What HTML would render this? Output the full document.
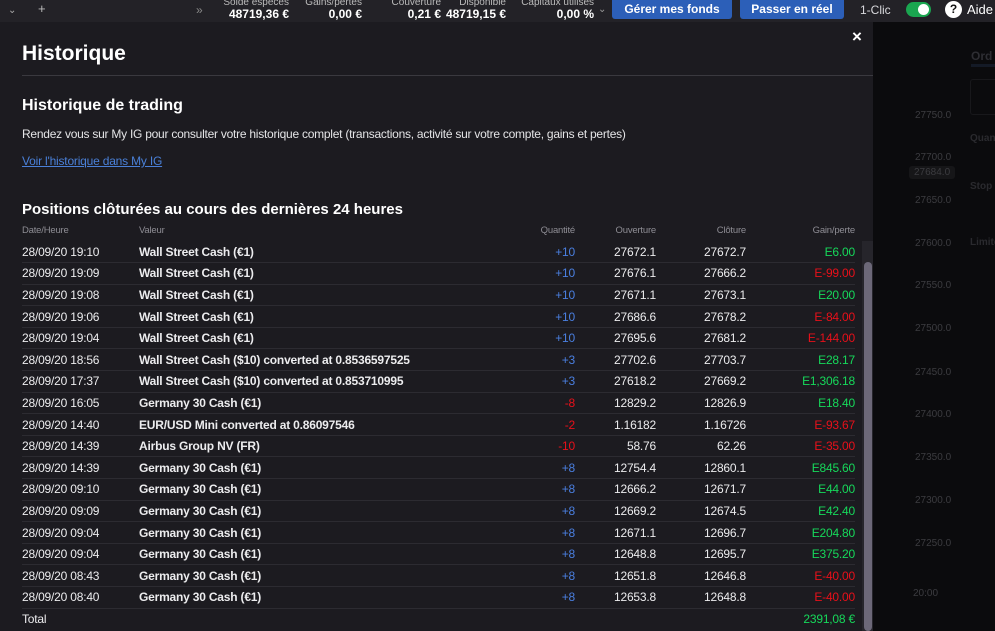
<!DOCTYPE html>
<html><head><meta charset="utf-8">
<style>
*{margin:0;padding:0;box-sizing:border-box}
body{width:995px;height:631px;overflow:hidden;background:#0a0a0c;font-family:"Liberation Sans",sans-serif;color:#e8e8ea;position:relative}
.top{position:absolute;left:0;top:0;width:995px;height:22px;background:#232227}
.top .t{position:absolute;font-size:12px;line-height:12px;color:#d8d8dc;white-space:nowrap}
.lab{position:absolute;top:-3px;font-size:10px;color:#bbb;text-align:right;white-space:nowrap}
.val{position:absolute;top:7px;font-size:12px;font-weight:bold;color:#fff;text-align:right;white-space:nowrap}
.btn{position:absolute;top:0;height:19px;background:#2c5fb8;border-radius:0 0 3px 3px;color:#fff;font-size:12px;font-weight:bold;text-align:center;line-height:18px}
.panel{position:absolute;left:0;top:22px;width:873px;height:609px;background:#1c1b20}
.side{position:absolute;left:873px;top:22px;width:122px;height:609px;background:#0b0b0d}
.ax{position:absolute;left:915px;font-size:10px;color:#3c3c40}
h1{position:absolute;left:22px;top:42px;font-size:21px;font-weight:bold;color:#fff}
.hr{position:absolute;left:22px;top:75px;width:851px;height:1px;background:#3a393f}
h2{position:absolute;left:22px;top:97px;font-size:16px;font-weight:bold;color:#fff}
.p{position:absolute;left:22px;top:127px;font-size:12px;color:#e4e4e6;letter-spacing:-0.25px;white-space:nowrap}
.a{position:absolute;left:22px;top:154px;font-size:12px;color:#4a80d8;text-decoration:underline;letter-spacing:-0.2px}
h3{position:absolute;left:22px;top:201px;font-size:15px;font-weight:bold;color:#fff}
table{position:absolute;left:22px;top:223px;width:833px;border-collapse:collapse;table-layout:fixed;font-size:12px;letter-spacing:-0.2px}
th{font-size:9.5px;font-weight:normal;color:#8e8d94;height:18px;text-align:left;vertical-align:top;padding-top:2px}
td{height:21.6px;border-bottom:1px solid #2c2b31;white-space:nowrap;color:#ececee}
tr.last td{border-bottom:none}
.r{text-align:right}
.n{font-weight:bold}
.b{color:#4a7fe0}.rd{color:#e8101a}.g{color:#16d85a}
.sb{position:absolute;left:862px;top:241px;width:11px;height:390px;background:#26252b}
.th{position:absolute;left:864px;top:262px;width:8px;height:369px;background:#6c6878;border-radius:4px}
</style></head><body>
<div class="top">
 <div class="t" style="left:8px;top:5px;font-size:10px;color:#aaa">⌄</div>
 <div class="t" style="left:38px;top:3px;font-size:13px;color:#bbb">+</div>
 <div class="t" style="left:196px;top:4px;font-size:12px;color:#888">»</div>
 <div class="lab" style="right:706px">Solde espèces</div><div class="val" style="right:706px">48719,36 €</div>
 <div class="lab" style="right:633px">Gains/pertes</div><div class="val" style="right:633px">0,00 €</div>
 <div class="lab" style="right:554px">Couverture</div><div class="val" style="right:554px">0,21 €</div>
 <div class="lab" style="right:489px">Disponible</div><div class="val" style="right:489px">48719,15 €</div>
 <div class="lab" style="right:401px">Capitaux utilisés</div><div class="val" style="right:401px">0,00 %</div>
 <div class="t" style="left:598px;top:4px;font-size:10px;color:#999">⌄</div>
 <div class="btn" style="left:612px;width:120px">Gérer mes fonds</div>
 <div class="btn" style="left:740px;width:104px">Passer en réel</div>
 <div class="t" style="left:860px;top:4px">1-Clic</div>
 <div style="position:absolute;left:906px;top:2px;width:25px;height:15px;border-radius:8px;background:#1aa650"><div style="position:absolute;right:2px;top:2px;width:11px;height:11px;border-radius:50%;background:#fff"></div></div>
 <div style="position:absolute;left:945px;top:1px;width:17px;height:17px;border-radius:50%;background:#fff;color:#111;font-size:12px;font-weight:bold;text-align:center;line-height:17px">?</div>
 <div class="t" style="left:967px;top:4px;font-size:13px;color:#fff">Aide</div>
</div>
<div class="side">
 <div style="position:absolute;left:98px;top:27px;font-size:12px;color:#2e2e33;font-weight:bold">Ord</div>
 <div style="position:absolute;left:98px;top:42px;width:24px;height:3px;background:#141a26"></div>
 <div style="position:absolute;left:97px;top:57px;width:30px;height:36px;border:1px solid #18181b;border-radius:3px"></div>
 <div style="position:absolute;left:97px;top:111px;font-size:10px;color:#2a2a2e;font-weight:bold">Quan</div>
 <div style="position:absolute;left:97px;top:159px;font-size:10px;color:#2a2a2e;font-weight:bold">Stop</div>
 <div style="position:absolute;left:97px;top:215px;font-size:10px;color:#2a2a2e;font-weight:bold">Limite</div>
</div>
<div class="ax" style="top:110px">27750.0</div><div class="ax" style="top:152px">27700.0</div>
<div class="ax" style="top:166px;left:909px;background:#161618;padding:1px 5px;border-radius:3px">27684.0</div>
<div class="ax" style="top:195px">27650.0</div><div class="ax" style="top:238px">27600.0</div>
<div class="ax" style="top:280px">27550.0</div><div class="ax" style="top:323px">27500.0</div>
<div class="ax" style="top:367px">27450.0</div><div class="ax" style="top:409px">27400.0</div>
<div class="ax" style="top:452px">27350.0</div><div class="ax" style="top:495px">27300.0</div>
<div class="ax" style="top:538px">27250.0</div><div class="ax" style="top:588px;left:913px">20:00</div>
<div class="panel"></div>
<div style="position:absolute;left:852px;top:27px;font-size:17px;font-weight:bold;color:#fff">×</div>
<h1>Historique</h1>
<div class="hr"></div>
<h2>Historique de trading</h2>
<div class="p">Rendez vous sur My IG pour consulter votre historique complet (transactions, activité sur votre compte, gains et pertes)</div>
<div class="a">Voir l'historique dans My IG</div>
<h3>Positions clôturées au cours des dernières 24 heures</h3>
<table>
<colgroup><col style="width:117px"><col style="width:330px"><col style="width:106px"><col style="width:81px"><col style="width:90px"><col style="width:109px"></colgroup>
<tr><th>Date/Heure</th><th>Valeur</th><th class="r">Quantité</th><th class="r">Ouverture</th><th class="r">Clôture</th><th class="r">Gain/perte</th></tr>
<tr><td>28/09/20 19:10</td><td class="n">Wall Street Cash (€1)</td><td class="r b">+10</td><td class="r">27672.1</td><td class="r">27672.7</td><td class="r g">E6.00</td></tr>
<tr><td>28/09/20 19:09</td><td class="n">Wall Street Cash (€1)</td><td class="r b">+10</td><td class="r">27676.1</td><td class="r">27666.2</td><td class="r rd">E-99.00</td></tr>
<tr><td>28/09/20 19:08</td><td class="n">Wall Street Cash (€1)</td><td class="r b">+10</td><td class="r">27671.1</td><td class="r">27673.1</td><td class="r g">E20.00</td></tr>
<tr><td>28/09/20 19:06</td><td class="n">Wall Street Cash (€1)</td><td class="r b">+10</td><td class="r">27686.6</td><td class="r">27678.2</td><td class="r rd">E-84.00</td></tr>
<tr><td>28/09/20 19:04</td><td class="n">Wall Street Cash (€1)</td><td class="r b">+10</td><td class="r">27695.6</td><td class="r">27681.2</td><td class="r rd">E-144.00</td></tr>
<tr><td>28/09/20 18:56</td><td class="n">Wall Street Cash ($10) converted at 0.8536597525</td><td class="r b">+3</td><td class="r">27702.6</td><td class="r">27703.7</td><td class="r g">E28.17</td></tr>
<tr><td>28/09/20 17:37</td><td class="n">Wall Street Cash ($10) converted at 0.853710995</td><td class="r b">+3</td><td class="r">27618.2</td><td class="r">27669.2</td><td class="r g">E1,306.18</td></tr>
<tr><td>28/09/20 16:05</td><td class="n">Germany 30 Cash (€1)</td><td class="r rd">-8</td><td class="r">12829.2</td><td class="r">12826.9</td><td class="r g">E18.40</td></tr>
<tr><td>28/09/20 14:40</td><td class="n">EUR/USD Mini converted at 0.86097546</td><td class="r rd">-2</td><td class="r">1.16182</td><td class="r">1.16726</td><td class="r rd">E-93.67</td></tr>
<tr><td>28/09/20 14:39</td><td class="n">Airbus Group NV (FR)</td><td class="r rd">-10</td><td class="r">58.76</td><td class="r">62.26</td><td class="r rd">E-35.00</td></tr>
<tr><td>28/09/20 14:39</td><td class="n">Germany 30 Cash (€1)</td><td class="r b">+8</td><td class="r">12754.4</td><td class="r">12860.1</td><td class="r g">E845.60</td></tr>
<tr><td>28/09/20 09:10</td><td class="n">Germany 30 Cash (€1)</td><td class="r b">+8</td><td class="r">12666.2</td><td class="r">12671.7</td><td class="r g">E44.00</td></tr>
<tr><td>28/09/20 09:09</td><td class="n">Germany 30 Cash (€1)</td><td class="r b">+8</td><td class="r">12669.2</td><td class="r">12674.5</td><td class="r g">E42.40</td></tr>
<tr><td>28/09/20 09:04</td><td class="n">Germany 30 Cash (€1)</td><td class="r b">+8</td><td class="r">12671.1</td><td class="r">12696.7</td><td class="r g">E204.80</td></tr>
<tr><td>28/09/20 09:04</td><td class="n">Germany 30 Cash (€1)</td><td class="r b">+8</td><td class="r">12648.8</td><td class="r">12695.7</td><td class="r g">E375.20</td></tr>
<tr><td>28/09/20 08:43</td><td class="n">Germany 30 Cash (€1)</td><td class="r b">+8</td><td class="r">12651.8</td><td class="r">12646.8</td><td class="r rd">E-40.00</td></tr>
<tr><td>28/09/20 08:40</td><td class="n">Germany 30 Cash (€1)</td><td class="r b">+8</td><td class="r">12653.8</td><td class="r">12648.8</td><td class="r rd">E-40.00</td></tr>
<tr class="last"><td>Total</td><td></td><td></td><td></td><td></td><td class="r g">2391,08 €</td></tr>
</table>
<div class="sb"></div><div class="th"></div>
</body></html>
